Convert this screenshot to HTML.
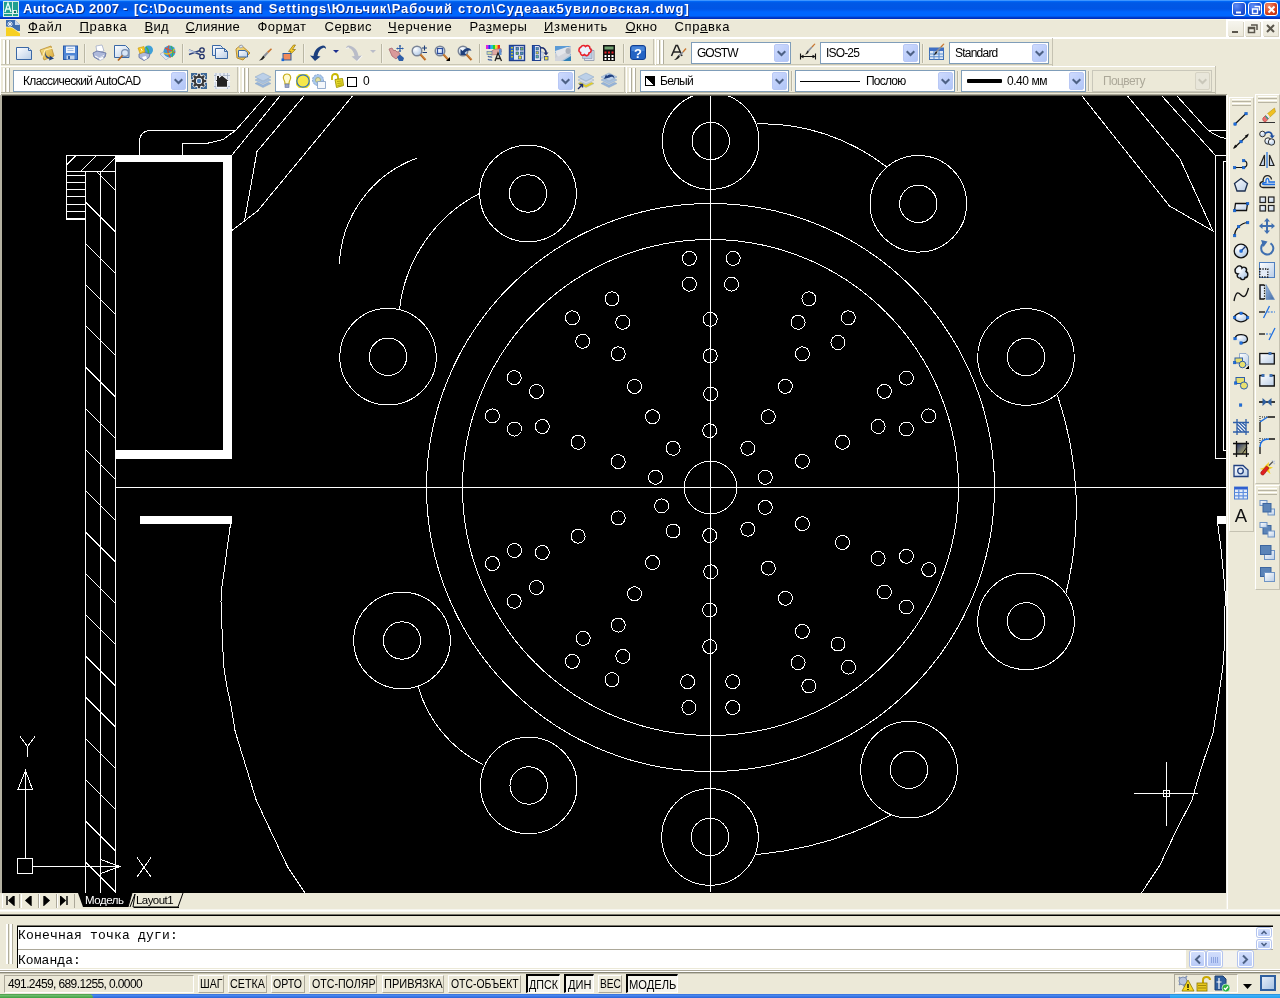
<!DOCTYPE html><html><head><meta charset="utf-8"><title>AutoCAD 2007</title><style>
*,*:before,*:after{margin:0;padding:0;box-sizing:border-box}
html,body{width:1280px;height:998px;overflow:hidden;background:#ece9d8;font-family:"Liberation Sans",sans-serif;font-size:11px;color:#000}
.a{position:absolute}
#title{left:0;top:0;width:1280px;height:19px;background:linear-gradient(#3d95ff 0,#3d95ff 1px,#0066f5 1px,#0066f5 2px,#005fec 2px,#0058e6 3px,#0055e5 9px,#0060f8 11px,#0066ff 12px,#0066ff 16px,#0048d8 17px,#0030c0 18px,#0030c0 19px)}
#title .t{left:23px;top:1px;font-weight:bold;font-size:13.5px;color:#fff;white-space:nowrap;letter-spacing:.25px;text-shadow:1px 1px 0 #0a1f6b}
.cb{top:2px;width:14px;height:14px;border:1px solid #fff;border-radius:3px;background:radial-gradient(circle at 30% 25%,#5f8df5,#1f51d6 60%,#1741b8)}
.cb.x{background:radial-gradient(circle at 30% 25%,#f08a6c,#d8401c 60%,#b02c0c)}
#menu{left:0;top:19px;width:1280px;height:18px;background:#ece9d8}
#menu span{position:absolute;top:0px;font-size:13.3px;line-height:18px;white-space:nowrap;letter-spacing:.1px}
#menu u{text-decoration:underline;text-underline-offset:1px}
.wl{background:#fff}
.mb{top:21px;width:15px;height:15px;background:linear-gradient(#f6f5ee,#ebe8da);box-shadow:1px 1px 0 #d4d0c0}
.tb{background:#ece9d8}
.sep{width:2px;border-left:1px solid #bab7a4;border-right:1px solid #f3f1e6}
.grip{width:7px}
.grip:before,.grip:after{content:"";position:absolute;top:0;bottom:0;width:3px;border-left:2px solid #fff;border-right:1px solid #b0ad9c;background:#fff}
.grip:before{left:0}.grip:after{left:4px}
.hgrip{height:7px}
.hgrip:before,.hgrip:after{content:"";position:absolute;left:0;right:0;height:3px;border-top:1px solid #fff;border-bottom:1px solid #b8b4a2;background:#ece9d8}
.hgrip:before{top:0}.hgrip:after{top:4px}
.combo{background:#fff;border:1px solid #7f9db9;height:22px;font-size:11px;line-height:20px;white-space:nowrap;overflow:hidden}
.combo .dd{position:absolute;right:1px;top:1px;bottom:1px;width:15px;border-radius:2px;background:linear-gradient(135deg,#cddafd,#bccdfa 60%,#b0c6f6);border:1px solid #b9c8f5}
.combo .dd svg{position:absolute;left:2px;top:5px}
.combo.dis{background:#ece9d8;border-color:#c9c7ba;color:#aca899}
.combo.dis .dd{background:#e8e6da;border-color:#d6d3c4}
.combo span{position:absolute;top:0}
#root{position:absolute;left:0;top:0;width:1280px;height:998px;will-change:transform;transform:translateZ(0)}
#draw{left:2px;top:96px;width:1224px;height:797px;background:#000;overflow:hidden}
.sb{top:975px;height:17px;font-size:11.5px;line-height:17px;text-align:center;border:1px solid;border-color:#fff #aca899 #aca899 #fff;white-space:nowrap;letter-spacing:.2px}
.sb.on{border-color:#000 #fff #fff #000;border-width:2px 1px 1px 2px;line-height:15px}
</style></head><body><div id="root">
<div id="title" class="a">
<svg class="a" style="left:3px;top:1px" width="16" height="16" viewBox="0 0 16 16"><rect width="16" height="16" fill="#1f9f8f"/><rect x=".5" y=".5" width="15" height="15" fill="none" stroke="#d8f0e8"/><path d="M2 11L5 2L8 11M3 8H7" stroke="#e8fff8" stroke-width="1.300" fill="none"/><path d="M9.500 1V15M1 12.500H15" stroke="#d8f0e8" stroke-width="1"/><rect x="10.500" y="9.500" width="3" height="3" fill="#0f6f5f" stroke="#fff" stroke-width=".8"/></svg>
<span class="a" style="left:23px;top:1px;font:700 13px/16px 'Liberation Sans',sans-serif;letter-spacing:0.605px;color:#fff;white-space:pre;text-shadow:1px 1px 0 #0a2a8a;">AutoCAD</span>
<span class="a" style="left:89px;top:1px;font:700 13px/16px 'Liberation Sans',sans-serif;letter-spacing:0.395px;color:#fff;white-space:pre;text-shadow:1px 1px 0 #0a2a8a;">2007</span>
<span class="a" style="left:123px;top:1px;font:700 13px/16px 'Liberation Sans',sans-serif;letter-spacing:1.656px;color:#fff;white-space:pre;text-shadow:1px 1px 0 #0a2a8a;">-</span>
<span class="a" style="left:134px;top:1px;font:700 13px/16px 'Liberation Sans',sans-serif;letter-spacing:0.542px;color:#fff;white-space:pre;text-shadow:1px 1px 0 #0a2a8a;">[C:\Documents</span>
<span class="a" style="left:238.8px;top:1px;font:700 13px/16px 'Liberation Sans',sans-serif;letter-spacing:0.125px;color:#fff;white-space:pre;text-shadow:1px 1px 0 #0a2a8a;">and</span>
<span class="a" style="left:268.8px;top:1px;font:700 13px/16px 'Liberation Sans',sans-serif;letter-spacing:0.885px;color:#fff;white-space:pre;text-shadow:1px 1px 0 #0a2a8a;">Settings\Юльчик\Рабочий</span>
<span class="a" style="left:458px;top:1px;font:700 13px/16px 'Liberation Sans',sans-serif;letter-spacing:1.061px;color:#fff;white-space:pre;text-shadow:1px 1px 0 #0a2a8a;">стол\Судеаак5увиловская.dwg]</span>
<div class="a cb" style="left:1232px"><svg class="a" style="left:0;top:0" width="13" height="13" viewBox="0 0 13 13"><path d="M3 9.500H8" stroke="#fff" stroke-width="2"/></svg></div>
<div class="a cb" style="left:1248px"><svg class="a" style="left:0;top:0" width="13" height="13" viewBox="0 0 13 13"><path d="M5.500 3.500H10.500V7.500M3.500 6H8.500V10.500H3.500Z" stroke="#fff" stroke-width="1.400" fill="none"/></svg></div>
<div class="a cb x" style="left:1264px"><svg class="a" style="left:0;top:0" width="13" height="13" viewBox="0 0 13 13"><path d="M3.500 3.500L9.500 9.500M9.500 3.500L3.500 9.500" stroke="#fff" stroke-width="2"/></svg></div>
</div>
<div id="menu" class="a"></div>
<svg class="a" style="left:5px;top:20px" width="16" height="16" viewBox="0 0 16 16"><path d="M1 0H10L15 5V11H1Z" fill="#3f6fb0"/><path d="M10 0V5H15Z" fill="#c9d8ec"/><path d="M5 1V7M2 4H8M3 2L7 6M7 2L3 6" stroke="#fff" stroke-width=".8"/><path d="M1 16V7L7 7.500L15 13V16Z" fill="#f7d020"/><path d="M1 7L7 7.500L15 13" stroke="#fff8c0" stroke-width=".8" fill="none"/></svg>
<span class="a" style="left:28px;top:18px;font:400 13px/18px 'Liberation Sans',sans-serif;letter-spacing:0.633px;color:#000;white-space:pre;"><u>Ф</u>айл</span>
<span class="a" style="left:79.5px;top:18px;font:400 13px/18px 'Liberation Sans',sans-serif;letter-spacing:0.680px;color:#000;white-space:pre;"><u>П</u>равка</span>
<span class="a" style="left:144.5px;top:18px;font:400 13px/18px 'Liberation Sans',sans-serif;letter-spacing:0.323px;color:#000;white-space:pre;"><u>В</u>ид</span>
<span class="a" style="left:185.5px;top:18px;font:400 13px/18px 'Liberation Sans',sans-serif;letter-spacing:0.221px;color:#000;white-space:pre;"><u>С</u>лияние</span>
<span class="a" style="left:257.5px;top:18px;font:400 13px/18px 'Liberation Sans',sans-serif;letter-spacing:0.469px;color:#000;white-space:pre;">Фор<u>м</u>ат</span>
<span class="a" style="left:324.5px;top:18px;font:400 13px/18px 'Liberation Sans',sans-serif;letter-spacing:0.495px;color:#000;white-space:pre;">Се<u>р</u>вис</span>
<span class="a" style="left:388px;top:18px;font:400 13px/18px 'Liberation Sans',sans-serif;letter-spacing:0.748px;color:#000;white-space:pre;"><u>Ч</u>ерчение</span>
<span class="a" style="left:469.5px;top:18px;font:400 13px/18px 'Liberation Sans',sans-serif;letter-spacing:0.567px;color:#000;white-space:pre;">Ра<u>з</u>меры</span>
<span class="a" style="left:544px;top:18px;font:400 13px/18px 'Liberation Sans',sans-serif;letter-spacing:0.670px;color:#000;white-space:pre;"><u>И</u>зменить</span>
<span class="a" style="left:625.5px;top:18px;font:400 13px/18px 'Liberation Sans',sans-serif;letter-spacing:0.445px;color:#000;white-space:pre;"><u>О</u>кно</span>
<span class="a" style="left:674.5px;top:18px;font:400 13px/18px 'Liberation Sans',sans-serif;letter-spacing:0.643px;color:#000;white-space:pre;">Спр<u>а</u>вка</span>
<div class="a wl" style="left:1226px;top:19px;width:54px;height:19px"></div>
<div class="a" style="left:0;top:19px;width:1226px;height:1px;background:#f7f2dc"></div>
<div class="a wl" style="left:0;top:37px;width:1280px;height:2px"></div>
<div class="a mb" style="left:1228px"><svg class="a" style="left:0;top:0" width="15" height="15" viewBox="0 0 15 15"><path d="M4 11H10" stroke="#5a564c" stroke-width="2"/></svg></div>
<div class="a mb" style="left:1245px"><svg class="a" style="left:0;top:0" width="15" height="15" viewBox="0 0 15 15"><path d="M6 4H12V9M3.500 6.500H9.500V11.500H3.500ZM3.500 7.500H9.500" stroke="#5a564c" stroke-width="1.500" fill="none"/></svg></div>
<div class="a mb" style="left:1263px"><svg class="a" style="left:0;top:0" width="15" height="15" viewBox="0 0 15 15"><path d="M4 4L11 11M11 4L4 11" stroke="#5a564c" stroke-width="2"/></svg></div>
<svg width="0" height="0" class="a"><defs>
<linearGradient id="pg" x1="0" y1="0" x2="1" y2="1"><stop offset="0" stop-color="#fff"/><stop offset="1" stop-color="#b9cde6"/></linearGradient>
<linearGradient id="bl" x1="0" y1="0" x2="1" y2="1"><stop offset="0" stop-color="#9db9de"/><stop offset="1" stop-color="#3f6aa5"/></linearGradient>
<linearGradient id="yl" x1="0" y1="0" x2="1" y2="1"><stop offset="0" stop-color="#f7e28a"/><stop offset="1" stop-color="#d9a93a"/></linearGradient>
<radialGradient id="gl" cx=".35" cy=".3" r=".8"><stop offset="0" stop-color="#fff"/><stop offset="1" stop-color="#a9c4e4"/></radialGradient>
<linearGradient id="dk" x1="0" y1="0" x2="1" y2="1"><stop offset="0" stop-color="#7f9fcb"/><stop offset="1" stop-color="#44679b"/></linearGradient>
</defs></svg>
<div class="a" style="left:0;top:64px;width:1053px;height:1px;background:#c9c6b4"></div>
<div class="a" style="left:0;top:66px;width:1216px;height:1px;background:#fff"></div>
<div class="a" style="left:0;top:92px;width:1216px;height:1px;background:#b8b5a3"></div>
<div class="a" style="left:0;top:94px;width:1227px;height:2px;background:linear-gradient(#c9c6b5,#8a8878 45%,#2a2926)"></div>
<div class="a" style="left:0;top:38px;width:1px;height:58px;background:#fff"></div>
<div class="a" style="left:653px;top:39px;width:1px;height:26px;background:#c5c2b2"></div><div class="a" style="left:655px;top:39px;width:1px;height:26px;background:#fff"></div>
<div class="a" style="left:1052px;top:38px;width:1px;height:28px;background:#c5c2b2"></div>
<div class="a" style="left:237px;top:67px;width:1px;height:26px;background:#c5c2b2"></div><div class="a" style="left:239px;top:67px;width:1px;height:26px;background:#fff"></div>
<div class="a" style="left:624px;top:67px;width:1px;height:26px;background:#c5c2b2"></div><div class="a" style="left:626px;top:67px;width:1px;height:26px;background:#fff"></div>
<div class="a" style="left:1215px;top:66px;width:1px;height:28px;background:#c5c2b2"></div>
<div class="a grip" style="left:3px;top:40px;height:24px"></div>
<div class="a grip" style="left:657px;top:40px;height:24px"></div>
<div class="a grip" style="left:3px;top:68px;height:24px"></div>
<div class="a grip" style="left:242px;top:68px;height:24px"></div>
<div class="a grip" style="left:629px;top:68px;height:24px"></div>
<svg class="a" style="left:16px;top:44px;overflow:visible" width="16" height="16" viewBox="0 0 16 16"><path d="M.5 3.5H12.5L15.5 6.5V15.5H.5Z" fill="url(#pg)" stroke="#3a68a6"/><path d="M12.5 3.5V6.5H15.5" fill="#dfe9f5" stroke="#3a68a6"/></svg>
<svg class="a" style="left:39px;top:45px;overflow:visible" width="16" height="16" viewBox="0 0 16 16"><path d="M1 5L12 1L15 11L5 15Z" fill="url(#yl)" stroke="#b98d32" stroke-width=".8"/><path d="M3 13L6 5L14 3" fill="none" stroke="#fff3c4"/><path d="M7 6C6 10 8 12 11 12.5L10.5 10.5L15 13.5L10 15.5L10.5 13.8C7 13.5 5 10.5 7 6Z" fill="#1d3f7a"/></svg>
<svg class="a" style="left:63px;top:44px;overflow:visible" width="16" height="16" viewBox="0 0 16 16"><rect x=".500" y="2" width="14" height="13.500" fill="#4f86d6" stroke="#2a5aa8"/><rect x="3" y="2.500" width="9" height="6.500" fill="#eef3fb"/><path d="M4.500 4.500H10.500M4.500 6.500H10.500" stroke="#8fb0dc" stroke-width=".800"/><rect x="3.500" y="11.500" width="8" height="4" fill="#c5d5ea"/><rect x="5" y="12" width="2" height="3" fill="#2f5fa8"/></svg>
<svg class="a" style="left:92px;top:45px;overflow:visible" width="16" height="16" viewBox="0 0 16 16"><path d="M4 1L10 0L12 6L5 8Z" fill="#fff" stroke="#98a4c4" stroke-width=".7"/><path d="M1 8L5 6L14 8L13 12L7 15L2 12Z" fill="#aeb9da" stroke="#5b6b9e" stroke-width=".8"/><path d="M3 11L7 13L12 10.5" stroke="#fff" fill="none"/><path d="M6 13L11 11.5L12 13.5L8 15.5Z" fill="#fff" stroke="#98a4c4" stroke-width=".5"/></svg>
<svg class="a" style="left:114px;top:44px;overflow:visible" width="16" height="16" viewBox="0 0 16 16"><path d="M.5 1.5H11.5L15 5V13.5H.5Z" fill="url(#pg)" stroke="#3a68a6"/><circle cx="11" cy="9" r="3.400" fill="#dbe8f6" fill-opacity=".850" stroke="#7a8fb0" stroke-width="1.200"/><path d="M8.500 11.500L4 16.500" stroke="#b5651d" stroke-width="1.800"/></svg>
<svg class="a" style="left:137px;top:45px;overflow:visible" width="16" height="16" viewBox="0 0 16 16"><circle cx="11.5" cy="5" r="4.5" fill="#3fa0d8"/><path d="M9 2C11 4 12 7 11 9.5" stroke="#3fb34f" stroke-width="1.5" fill="none"/><path d="M2 9L6 7L13 9L12 12.5L7 15.5L2 12.5Z" fill="#aeb9da" stroke="#5b6b9e" stroke-width=".8"/><path d="M5 12L9 11L10 13.5L7 15Z" fill="#fff"/><path d="M1 3L7 1.5L8 7L3 8.5Z" fill="#f2c722" stroke="#c9960c" stroke-width=".6"/><path d="M4 3.5L5 5.5L4 6.5" stroke="#fff" fill="none"/></svg>
<svg class="a" style="left:160px;top:45px;overflow:visible" width="16" height="16" viewBox="0 0 16 16"><path d="M0 9L5 6L12 10L6 15Z" fill="#dfe6f2" stroke="#9aa7c0" stroke-width=".6"/><circle cx="9.5" cy="6.5" r="6" fill="#3b9ad6"/><path d="M5 3C8 5 13 5 15 8M9 .5C7 4 8 9 10.5 12.5" stroke="#e05030" stroke-width="1.2" fill="none"/><path d="M4 8C7 10 12 9 14.5 4" stroke="#f0c020" stroke-width="1.3" fill="none"/><path d="M11 1C13 4 13 9 12 12" stroke="#3fb34f" stroke-width="1.2" fill="none"/></svg>
<svg class="a" style="left:189px;top:45px;overflow:visible" width="16" height="16" viewBox="0 0 16 16"><path d="M0 5L11 9.5M0 9.5L11 5.5" stroke="#31467f" stroke-width="1.4"/><path d="M0 4.5L9 8L0 7Z" fill="#c9d4ea"/><circle cx="13" cy="5" r="2.2" fill="none" stroke="#1f2f68" stroke-width="1.3"/><circle cx="13" cy="11.5" r="2.2" fill="none" stroke="#1f2f68" stroke-width="1.3"/></svg>
<svg class="a" style="left:212px;top:44px;overflow:visible" width="16" height="16" viewBox="0 0 16 16"><path d="M.5 1.5H8.5L10.5 3.5V11.5H.5Z" fill="url(#pg)" stroke="#3a68a6"/><path d="M3.5 4.5H12.5L15.5 7.5V14.5H3.5Z" fill="url(#pg)" stroke="#3a68a6"/><path d="M12.5 4.5V7.5H15.5" fill="none" stroke="#3a68a6"/></svg>
<svg class="a" style="left:235px;top:45px;overflow:visible" width="16" height="16" viewBox="0 0 16 16"><path d="M1 4L6 0L15 8L8 15L2 13Z" fill="url(#yl)" stroke="#b98d32"/><path d="M4 1L7 0L8 2L5 3Z" fill="#dfe6f2" stroke="#7f8fb0" stroke-width=".6"/><path d="M3.5 5.5H10L12.5 7.5V12H3.5Z" fill="url(#pg)" stroke="#3a68a6"/></svg>
<svg class="a" style="left:258px;top:45px;overflow:visible" width="16" height="16" viewBox="0 0 16 16"><path d="M1 15.5C3.5 15.5 5.5 14.5 7 12L5.3 10.5C4 12 3.5 14 1 15.5Z" fill="#222"/><path d="M5.3 10.5L7 12L10.5 8L9 6.7Z" fill="#8a8f99"/><path d="M9 6.700L10.500 8L14 4.200L13 3.200Z" fill="#c8742e"/></svg>
<svg class="a" style="left:281px;top:45px;overflow:visible" width="16" height="16" viewBox="0 0 16 16"><path d="M12.5 0L7.5 6.5H10L7 11.5L14.5 4.5H11.5L14.500 0Z" fill="#f7cf2a" stroke="#8f6d0f" stroke-width=".700"/><rect x="2" y="8.500" width="8" height="6.500" fill="#f08a5a" stroke="#2f5f9f"/><rect x=".500" y="13.500" width="2.600" height="2.600" fill="#1565d8"/></svg>
<svg class="a" style="left:310px;top:45px;overflow:visible" width="16" height="16" viewBox="0 0 16 16"><path d="M5 16L0 10.5L3.5 11C4 6 8 1 13 .5C15 .5 16 2 16 4C15 3 14 2.5 13 3C10 4 8 7 7.5 11L10.5 11.5Z" fill="#1c3f7e"/></svg>
<svg class="a" style="left:346px;top:45px;overflow:visible" width="16" height="16" viewBox="0 0 16 16"><path d="M11.500 16.500L16.500 11L15.500 10.500L10.500 16Z" fill="#fff"/><path d="M11 16L16 10.500L12.500 11C12 6 8 1 3 .500C1 .500 0 2 0 4C1 3 2 2.500 3 3C6 4 8 7 8.500 11L5.500 11.500Z" fill="#b9bcc8"/><path d="M0 4C.5 3 2 2.500 3 3" stroke="#fff" stroke-width=".8" fill="none"/></svg>
<svg class="a" style="left:388px;top:45px;overflow:visible" width="16" height="16" viewBox="0 0 16 16"><path d="M1 4L4 3L6 6L7 5L9 7L10.500 6.500L12 10L8 14L4 11Z" fill="#d99a9a" stroke="#a05c66" stroke-width=".7"/><path d="M9 12L12 9.500L16 13L15 16H11Z" fill="#2f5fa8"/><path d="M12 0V7M8.500 3.500H15.500" stroke="#2f5fa8" stroke-width="1.1"/><path d="M12 0L13.300 1.500H10.700ZM12 7L13.300 5.500H10.700ZM8.500 3.500L10 2.200V4.800ZM15.500 3.500L14 2.200V4.800Z" fill="#2f5fa8"/></svg>
<svg class="a" style="left:411px;top:45px;overflow:visible" width="16" height="16" viewBox="0 0 16 16"><circle cx="6" cy="6" r="4.800" fill="url(#gl)" stroke="#7a8496" stroke-width="1.400"/><path d="M9.500 9.500L14.500 15" stroke="#b5651d" stroke-width="2"/><path d="M9.800 9.200L14.800 14.500" stroke="#e7a660" stroke-width=".7"/><path d="M11 3H16M13.500 .500V5.500M11.500 7.500H16" stroke="#1f3f7a" stroke-width="1.100"/></svg>
<svg class="a" style="left:434px;top:45px;overflow:visible" width="16" height="16" viewBox="0 0 16 16"><circle cx="6" cy="6" r="4.800" fill="url(#gl)" stroke="#7a8496" stroke-width="1.400"/><path d="M9.500 9.500L14.500 15" stroke="#b5651d" stroke-width="2"/><path d="M9.800 9.200L14.800 14.500" stroke="#e7a660" stroke-width=".7"/><rect x="3.500" y="3.500" width="5" height="5" fill="none" stroke="#2f4f9f" stroke-width="1.200"/><path d="M16 12V16H12Z" fill="#000"/></svg>
<svg class="a" style="left:457px;top:45px;overflow:visible" width="16" height="16" viewBox="0 0 16 16"><circle cx="6" cy="6" r="4.800" fill="url(#gl)" stroke="#7a8496" stroke-width="1.400"/><path d="M9.500 9.500L14.500 15" stroke="#b5651d" stroke-width="2"/><path d="M9.800 9.200L14.800 14.500" stroke="#e7a660" stroke-width=".7"/><path d="M3.5 4V10H9.5L7.6 8.1C9 6 11.5 4.8 14.5 5.8C13.5 2.5 9 1.5 5.6 6.1Z" fill="#1f3f7a"/></svg>
<svg class="a" style="left:486px;top:45px;overflow:visible" width="16" height="16" viewBox="0 0 16 16"><rect x="0" y="0" width="2.400" height="4" fill="#e01fe0"/><rect x="2.300" y="0" width="2.400" height="4" fill="#2a2af0"/><rect x="4.600" y="0" width="2.400" height="4" fill="#20c0e0"/><rect x="6.900" y="0" width="2.400" height="4" fill="#20d030"/><rect x="9.200" y="0" width="2.400" height="4" fill="#f0e020"/><rect x="11.500" y="0" width="2.500" height="4" fill="#f03020"/><path d="M3 8L8 4.500L15 3.500L15.500 7L11 9.500L5 10Z" fill="#e0a8a0" stroke="#9c6060" stroke-width=".6"/><rect x="1" y="6.500" width="5" height="3" fill="#cfd8a0" stroke="#5f7fb0" stroke-width=".7"/><path d="M2 11C3 13 5 11 6 12.500M2 14C3 16 5 14 6 15.500" stroke="#3f5f9f" fill="none" stroke-width="1.200"/><path d="M9 16L12 8L15.500 16M10 13.500H14.500" stroke="#222" fill="none" stroke-width="1.300"/><rect x="13" y="4" width="2.500" height="6" fill="#5f8fd0"/></svg>
<svg class="a" style="left:509px;top:45px;overflow:visible" width="16" height="16" viewBox="0 0 16 16"><rect x=".500" y=".500" width="15" height="15" fill="#dfe6f2" stroke="#1f3f8f" stroke-width="1.400"/><rect x="1" y="1" width="4" height="14" fill="#2d5fb5"/><path d="M3 2V14" stroke="#f0e020" stroke-width="1.500" stroke-dasharray="1.500 1.500"/><rect x="7" y="2.500" width="2.600" height="2.600" fill="#59a" stroke="#1f3f8f" stroke-width=".6"/><rect x="11.500" y="2.500" width="2.600" height="2.600" fill="#7b5" stroke="#1f3f8f" stroke-width=".6"/><rect x="7" y="7" width="2.600" height="2.600" fill="#7b5" stroke="#1f3f8f" stroke-width=".6"/><rect x="11.500" y="7" width="2.600" height="2.600" fill="#59a" stroke="#1f3f8f" stroke-width=".6"/><rect x="9.500" y="11" width="3" height="3" fill="#f0e020" stroke="#1f3f8f" stroke-width=".6"/></svg>
<svg class="a" style="left:532px;top:45px;overflow:visible" width="16" height="16" viewBox="0 0 16 16"><path d="M.500 .500H7L8.500 2V15.500H.500Z" fill="#e4eaf5" stroke="#1f3f8f" stroke-width="1.200"/><rect x="1" y="1" width="2" height="14" fill="#2d5fb5"/><rect x="4" y="2.500" width="2.500" height="2.500" fill="#59a" stroke="#1f3f8f" stroke-width=".5"/><rect x="4" y="6.500" width="2.500" height="2.500" fill="#cc4" stroke="#1f3f8f" stroke-width=".5"/><rect x="4" y="10.500" width="2.500" height="2.500" fill="#6b9" stroke="#1f3f8f" stroke-width=".5"/><path d="M8 3C12 2 14 5 14 8" stroke="#1f2f6f" stroke-width="1.600" fill="none"/><path d="M11.500 7.500H16.500L14 10.500Z" fill="#1f2f6f"/><rect x="12.500" y="11.500" width="3.500" height="3.500" fill="#f0e040" stroke="#1f3f8f" stroke-width=".7"/><rect x="9" y="7" width="2" height="6" fill="#e4eaf5" stroke="#7a8cb0" stroke-width=".5"/></svg>
<svg class="a" style="left:555px;top:45px;overflow:visible" width="16" height="16" viewBox="0 0 16 16"><rect x="0" y="1" width="16" height="15" fill="#5b9bd5"/><path d="M0 8L16 1V9L6 16H0Z" fill="#c9ced6"/><path d="M0 6L12 2C14 2 15 4 14 6L3 12Z" fill="#e4e6ea"/><ellipse cx="13" cy="6" rx="2.500" ry="3" fill="#aab0ba"/><path d="M0 13L10 8L16 10V16H0Z" fill="#d5d8de" fill-opacity=".7"/><path d="M8 16L16 11V16Z" fill="#2f7fb5"/></svg>
<svg class="a" style="left:578px;top:45px;overflow:visible" width="16" height="16" viewBox="0 0 16 16"><path d="M6.500 5.500H16V15.500H6.500Z" fill="#dfe4ee" stroke="#8a94ac" stroke-width=".800"/><path d="M4.500 4H14V13.500H4.500Z" fill="#b9cde6" stroke="#8a94ac" stroke-width=".600"/><path d="M3 2C4 0 6.500 0 7.500 1.500C9 0 12 .500 12 3.500C14 4.500 13.500 7.500 11 8C11 10.500 8 11.500 6.500 9.500C4.500 11 2 10 2.500 7.500C.500 7 0 3.500 3 2Z" fill="#eaf1fb" stroke="#e8202a" stroke-width="1.600"/></svg>
<svg class="a" style="left:603px;top:45px;overflow:visible" width="16" height="16" viewBox="0 0 16 16"><rect x="0" y="0" width="12" height="16" fill="#111"/><rect x="1.500" y="1.500" width="9" height="3" fill="#6f9f6f"/><g fill="#e8202a"><rect x="1.500" y="6.500" width="2" height="2"/><rect x="5" y="6.500" width="2" height="2"/><rect x="8.500" y="6.500" width="2" height="2"/></g><g fill="#fff"><rect x="1.500" y="10" width="2" height="2"/><rect x="5" y="10" width="2" height="2"/><rect x="8.500" y="10" width="2" height="2"/><rect x="1.500" y="13" width="2" height="2"/><rect x="5" y="13" width="2" height="2"/><rect x="8.500" y="13" width="2" height="2"/></g></svg>
<svg class="a" style="left:630px;top:45px;overflow:visible" width="16" height="16" viewBox="0 0 16 16"><rect x=".500" y=".500" width="15" height="14" rx="2.500" fill="#2464c4" stroke="#123f8f"/><path d="M1.500 3C1.500 2 2 1.500 3 1.500H13C14 1.500 14.500 2 14.500 3V6H1.500Z" fill="#5a93e0" fill-opacity=".7"/><text x="8" y="12.500" font-family="Liberation Sans,sans-serif" font-weight="bold" font-size="13" fill="#fff" text-anchor="middle">?</text></svg>
<div class="a sep" style="left:84px;top:44px;height:19px"></div>
<div class="a sep" style="left:182px;top:44px;height:19px"></div>
<div class="a sep" style="left:303px;top:44px;height:19px"></div>
<div class="a sep" style="left:381px;top:44px;height:19px"></div>
<div class="a sep" style="left:479px;top:44px;height:19px"></div>
<div class="a sep" style="left:623px;top:44px;height:19px"></div>
<svg class="a" style="left:333px;top:50px;overflow:visible" width="6" height="3" viewBox="0 0 6 3"><path d="M0 0H6L3 3Z" fill="#1c2f8e"/></svg>
<svg class="a" style="left:370px;top:50px;overflow:visible" width="6" height="3" viewBox="0 0 6 3"><path d="M0 0H6L3 3Z" fill="#b9bcc8"/></svg>
<svg class="a" style="left:671px;top:44px;overflow:visible" width="16" height="16" viewBox="0 0 16 16"><path d="M.5 12L5 1.5H6.5L11 12M2.5 8H9" stroke="#222" stroke-width="1.500" fill="none"/><path d="M3 16C6 16 7.500 14.500 9 12.500L7.500 11C6 12.500 5.500 14.500 3 16Z" fill="#222"/><path d="M7.500 11L9 12.500L12.500 8.500L11.500 7.500Z" fill="#8a8f99"/><path d="M11.500 7.500L12.500 8.500L15.500 5L14.500 4Z" fill="#c8742e"/></svg>
<div class="a combo" style="left:691px;top:42px;width:100px;height:22px"><span class="a" style="left:5px;top:0px;font:400 12px/20px 'Liberation Sans',sans-serif;letter-spacing:-0.966px;color:#000;white-space:pre;">GOSTW</span><div class="dd"><svg width="9" height="7" viewBox="0 0 9 7"><path d="M.7 1.200L4.500 5L8.300 1.200" fill="none" stroke="#4d6185" stroke-width="2"/></svg></div></div>
<svg class="a" style="left:800px;top:44px;overflow:visible" width="16" height="16" viewBox="0 0 16 16"><path d="M0 12.500H16M.500 9.500V15.500M15.500 9.500V15.500" stroke="#111" stroke-width="1.100"/><path d="M0 12.500L3.500 10.800V14.200ZM16 12.500L12.500 10.800V14.200Z" fill="#111"/><path d="M4.500 10.500C7 10.500 8 9.500 9 7.500L7.500 6.500C6.500 8 6.500 9.500 4.500 10.500Z" fill="#222"/><path d="M7.500 6.500L9 7.500L12.500 3.500L11.500 2.500Z" fill="#8a8f99"/><path d="M11.500 2.500L12.500 3.500L15.500 0L14.500 -.5Z" fill="#c8742e"/></svg>
<div class="a combo" style="left:820px;top:42px;width:100px;height:22px"><span class="a" style="left:5px;top:0px;font:400 12px/20px 'Liberation Sans',sans-serif;letter-spacing:-0.836px;color:#000;white-space:pre;">ISO-25</span><div class="dd"><svg width="9" height="7" viewBox="0 0 9 7"><path d="M.7 1.200L4.500 5L8.300 1.200" fill="none" stroke="#4d6185" stroke-width="2"/></svg></div></div>
<div class="a sep" style="left:922px;top:44px;height:19px"></div>
<svg class="a" style="left:929px;top:44px;overflow:visible" width="16" height="16" viewBox="0 0 16 16"><rect x=".500" y="4" width="14" height="11.500" fill="#dfe8f5" stroke="#3f6fb5"/><rect x=".500" y="4" width="14" height="3" fill="#3f6fc5"/><path d="M.500 10H14.500M.500 12.800H14.500M5 7V15.500M10 7V15.500" stroke="#5f8fd0" stroke-width="1.100"/><path d="M4 11C6.500 11 7.500 10 8.500 8L7 7C6 8.500 6 10 4 11Z" fill="#222"/><path d="M7 7L8.500 8L12.500 3.500L11.500 2.500Z" fill="#8a8f99"/><path d="M11.500 2.500L12.500 3.500L15.500 0L14.500 -.5Z" fill="#c8742e"/></svg>
<div class="a combo" style="left:949px;top:42px;width:100px;height:22px"><span class="a" style="left:5px;top:0px;font:400 12px/20px 'Liberation Sans',sans-serif;letter-spacing:-0.775px;color:#000;white-space:pre;">Standard</span><div class="dd"><svg width="9" height="7" viewBox="0 0 9 7"><path d="M.7 1.200L4.500 5L8.300 1.200" fill="none" stroke="#4d6185" stroke-width="2"/></svg></div></div>
<div class="a combo" style="left:13px;top:70px;width:175px;height:22px"><span class="a" style="left:9px;top:0px;font:400 12px/20px 'Liberation Sans',sans-serif;letter-spacing:-0.641px;color:#000;white-space:pre;">Классический AutoCAD</span><div class="dd"><svg width="9" height="7" viewBox="0 0 9 7"><path d="M.7 1.200L4.500 5L8.300 1.200" fill="none" stroke="#4d6185" stroke-width="2"/></svg></div></div>
<svg class="a" style="left:191px;top:73px;overflow:visible" width="16" height="16" viewBox="0 0 16 16"><rect width="16" height="16" fill="#3d6896"/><g transform="translate(8 8)"><g fill="#fff"><rect x="-1.900" y="-7.800" width="3.800" height="3.500" transform="rotate(0)"/><rect x="-1.900" y="-7.800" width="3.800" height="3.500" transform="rotate(45)"/><rect x="-1.900" y="-7.800" width="3.800" height="3.500" transform="rotate(90)"/><rect x="-1.900" y="-7.800" width="3.800" height="3.500" transform="rotate(135)"/><rect x="-1.900" y="-7.800" width="3.800" height="3.500" transform="rotate(180)"/><rect x="-1.900" y="-7.800" width="3.800" height="3.500" transform="rotate(225)"/><rect x="-1.900" y="-7.800" width="3.800" height="3.500" transform="rotate(270)"/><rect x="-1.900" y="-7.800" width="3.800" height="3.500" transform="rotate(315)"/></g><circle r="4.600" fill="none" stroke="#fff" stroke-width="3.600"/><g fill="#3a3a3a"><rect x="-1.200" y="-7.200" width="2.400" height="3" transform="rotate(0)"/><rect x="-1.200" y="-7.200" width="2.400" height="3" transform="rotate(45)"/><rect x="-1.200" y="-7.200" width="2.400" height="3" transform="rotate(90)"/><rect x="-1.200" y="-7.200" width="2.400" height="3" transform="rotate(135)"/><rect x="-1.200" y="-7.200" width="2.400" height="3" transform="rotate(180)"/><rect x="-1.200" y="-7.200" width="2.400" height="3" transform="rotate(225)"/><rect x="-1.200" y="-7.200" width="2.400" height="3" transform="rotate(270)"/><rect x="-1.200" y="-7.200" width="2.400" height="3" transform="rotate(315)"/></g><circle r="4.200" fill="none" stroke="#3a3a3a" stroke-width="2.400"/><circle r="3" fill="#fff"/><circle r="2.200" fill="#4f7fb5"/></g></svg>
<svg class="a" style="left:214px;top:73px;overflow:visible" width="16" height="16" viewBox="0 0 16 16"><rect width="16" height="16" fill="#e6ebf2"/><path d="M0 2.500H16M0 13.500H16M2 0V16M6 0V3M10 0V3M13.500 0V16" stroke="#9aa8bc" stroke-width=".700"/><path d="M1.500 8L8 2.800L14.600 8H13V13.700H3V8ZM3 3H5V6L3 7.500Z" fill="#222" stroke="#fff" stroke-width="1.400" paint-order="stroke"/></svg>
<svg class="a" style="left:255px;top:73px;overflow:visible" width="16" height="16" viewBox="0 0 16 16"><path d="M8 0L16 4L8 8L0 4Z" fill="#bcd0e8" stroke="#7f9cc4" stroke-width=".5"/><path d="M0 7L8 11L16 7L13.500 5.800L8 8.500L2.500 5.800Z" fill="#a9c2e0" stroke="#7f9cc4" stroke-width=".4"/><path d="M0 10.500L8 14.500L16 10.500L13.500 9.300L8 12L2.500 9.300Z" fill="#96b4d8" stroke="#7f9cc4" stroke-width=".4"/></svg>
<div class="a combo" style="left:275px;top:70px;width:300px;height:22px"><svg class="a" style="left:6px;top:3px;overflow:visible" width="10" height="14" viewBox="0 0 10 14"><path d="M5 0C1.500 0 .500 3.500 2 6C3 7.500 3 8.500 3 10H7C7 8.500 7 7.500 8 6C9.500 3.500 8.500 0 5 0Z" fill="#fffbd0" stroke="#c9b020" stroke-width="1.200"/><rect x="3" y="10" width="4" height="3.500" fill="#9aa4c4" stroke="#5f6f9f" stroke-width=".6"/></svg><svg class="a" style="left:20px;top:3px;overflow:visible" width="14" height="14" viewBox="0 0 14 14"><rect x="0" y="0" width="14" height="14" fill="#f5e220"/><path d="M0 0L3 0L0 3ZM14 0V3L11 0ZM0 14V11L3 14ZM14 14H11L14 11Z" fill="#fff"/><circle cx="7" cy="7" r="6.200" fill="#f7e84a" stroke="#2f6fc0" stroke-width="1.200"/></svg><svg class="a" style="left:36px;top:3px;overflow:visible" width="14" height="15" viewBox="0 0 14 15"><circle cx="6" cy="6" r="5.500" fill="#a9c8ec" stroke="#6f93c4" stroke-width=".8" stroke-dasharray="2 1"/><circle cx="6" cy="6" r="2.500" fill="#e8e2a0" stroke="#8f9f6f" stroke-width=".7"/><path d="M5.500 7.500H13.500V14.500H5.500Z" fill="#f4f7fb" stroke="#7f9cc4" stroke-width=".8"/></svg><svg class="a" style="left:54px;top:2px;overflow:visible" width="14" height="15" viewBox="0 0 14 15"><path d="M2 7V4C2 0 8 0 8 4V6" fill="none" stroke="#c9b800" stroke-width="1.800"/><path d="M5 6.500L12.500 5.500L13.500 12.500L6.500 14.500Z" fill="#e8dc30" stroke="#9f9400" stroke-width=".9"/><path d="M7 8.500L11.500 8M7.300 10.500L12 10M7.500 12.500L12.300 11.800" stroke="#9f9400" stroke-width=".7"/></svg><div class="a" style="left:71px;top:6px;width:10px;height:10px;border:1px solid #000;background:#fff"></div><span class="a" style="left:87px;top:0px;font:400 12px/20px 'Liberation Sans',sans-serif;letter-spacing:-0.688px;color:#000;white-space:pre;">0</span><div class="dd"><svg width="9" height="7" viewBox="0 0 9 7"><path d="M.7 1.200L4.500 5L8.300 1.200" fill="none" stroke="#4d6185" stroke-width="2"/></svg></div></div>
<svg class="a" style="left:578px;top:73px;overflow:visible" width="16" height="16" viewBox="0 0 16 16"><path d="M8 0L16 4L8 8L0 4Z" fill="#bcd0e8" stroke="#7f9cc4" stroke-width=".5"/><path d="M0 7L8 11L16 7L13.500 5.800L8 8.500L2.500 5.800Z" fill="#d8dde6" stroke="#7f9cc4" stroke-width=".4"/><path d="M0 10.500L8 14.500L16 10.500L13.500 9.300L8 12L2.500 9.300Z" fill="#e8d020" stroke="#7f9cc4" stroke-width=".4"/><path d="M0 16L4.500 11.500M1.500 11.500H4.500V14.500" stroke="#1f2f6f" stroke-width="1.400" fill="none"/></svg>
<svg class="a" style="left:601px;top:73px;overflow:visible" width="16" height="16" viewBox="0 0 16 16"><path d="M8 0L16 4L8 8L0 4Z" fill="#bcd0e8" stroke="#7f9cc4" stroke-width=".5"/><path d="M0 7L8 11L16 7L13.500 5.800L8 8.500L2.500 5.800Z" fill="#a9c2e0" stroke="#7f9cc4" stroke-width=".4"/><path d="M0 10.500L8 14.500L16 10.500L13.500 9.300L8 12L2.500 9.300Z" fill="#96b4d8" stroke="#7f9cc4" stroke-width=".4"/><path d="M3 6L8.500 4.500L7.500 6C9 3.500 11.500 3 13.500 5.500C13.500 2 9 0 6 3L5 1.500Z" fill="#1f3f7e"/></svg>
<div class="a combo" style="left:640px;top:70px;width:149px;height:22px"><div class="a" style="left:4px;top:5px;width:10px;height:10px;background:linear-gradient(to top right,#fff 49%,#000 50%);border:1px solid #000"></div><span class="a" style="left:19px;top:0px;font:400 12px/20px 'Liberation Sans',sans-serif;letter-spacing:-0.697px;color:#000;white-space:pre;">Белый</span><div class="dd"><svg width="9" height="7" viewBox="0 0 9 7"><path d="M.7 1.200L4.500 5L8.300 1.200" fill="none" stroke="#4d6185" stroke-width="2"/></svg></div></div>
<div class="a sep" style="left:791px;top:71px;height:20px"></div>
<div class="a combo" style="left:795px;top:70px;width:160px;height:22px"><div class="a" style="left:4px;top:10px;width:60px;height:1px;background:#000"></div><span class="a" style="left:70px;top:0px;font:400 12px/20px 'Liberation Sans',sans-serif;letter-spacing:-0.768px;color:#000;white-space:pre;">Послою</span><div class="dd"><svg width="9" height="7" viewBox="0 0 9 7"><path d="M.7 1.200L4.500 5L8.300 1.200" fill="none" stroke="#4d6185" stroke-width="2"/></svg></div></div>
<div class="a sep" style="left:957px;top:71px;height:20px"></div>
<div class="a combo" style="left:961px;top:70px;width:125px;height:22px"><div class="a" style="left:5px;top:8px;width:35px;height:4px;background:#000;border-radius:1px"></div><span class="a" style="left:45px;top:0px;font:400 12px/20px 'Liberation Sans',sans-serif;letter-spacing:-0.458px;color:#000;white-space:pre;">0.40 мм</span><div class="dd"><svg width="9" height="7" viewBox="0 0 9 7"><path d="M.7 1.200L4.500 5L8.300 1.200" fill="none" stroke="#4d6185" stroke-width="2"/></svg></div></div>
<div class="a sep" style="left:1088px;top:71px;height:20px"></div>
<div class="a combo dis" style="left:1092px;top:70px;width:120px;height:22px"><span class="a" style="left:10px;top:0px;font:400 12px/20px 'Liberation Sans',sans-serif;letter-spacing:-0.618px;color:#aca899;white-space:pre;">Поцвету</span><div class="dd"><svg width="9" height="7" viewBox="0 0 9 7"><path d="M.7 1.200L4.500 5L8.300 1.200" fill="none" stroke="#c9c7ba" stroke-width="2"/></svg></div></div>
<div id="draw" class="a"><svg class="a" style="left:-2px;top:-96px" width="1280" height="998" viewBox="0 0 1280 998"><g fill="none" stroke="#fff" stroke-width="1" shape-rendering="crispEdges">
<circle cx="710.5" cy="487.5" r="284"/><circle cx="710.5" cy="487.5" r="248"/><circle cx="710.5" cy="487.5" r="26.3"/>
<circle cx="710.7" cy="141" r="48.3"/><circle cx="710.7" cy="141" r="18.7"/>
<circle cx="528" cy="193.5" r="48.3"/><circle cx="528" cy="193.5" r="18.7"/>
<circle cx="918.3" cy="203.8" r="48.3"/><circle cx="918.3" cy="203.8" r="18.7"/>
<circle cx="388" cy="356.7" r="48.3"/><circle cx="388" cy="356.7" r="18.7"/>
<circle cx="1026" cy="357" r="48.3"/><circle cx="1026" cy="357" r="18.7"/>
<circle cx="402" cy="640.5" r="48.3"/><circle cx="402" cy="640.5" r="18.7"/>
<circle cx="1026" cy="621.3" r="48.3"/><circle cx="1026" cy="621.3" r="18.7"/>
<circle cx="528.7" cy="785.5" r="48.3"/><circle cx="528.7" cy="785.5" r="18.7"/>
<circle cx="909" cy="769.7" r="48.3"/><circle cx="909" cy="769.7" r="18.7"/>
<circle cx="710" cy="837" r="48.3"/><circle cx="710" cy="837" r="18.7"/>
<circle cx="689.4" cy="258.4" r="7"/>
<circle cx="733.2" cy="258.4" r="7"/>
<circle cx="689.4" cy="284.2" r="7"/>
<circle cx="731.5" cy="284.2" r="7"/>
<circle cx="710.2" cy="319.3" r="7"/>
<circle cx="710.2" cy="355.8" r="7"/>
<circle cx="710.7" cy="393.9" r="7"/>
<circle cx="709.7" cy="430.7" r="7"/>
<circle cx="808.9" cy="298.8" r="7"/>
<circle cx="798.1" cy="322.3" r="7"/>
<circle cx="848.3" cy="317.8" r="7"/>
<circle cx="838" cy="342.5" r="7"/>
<circle cx="802.4" cy="353.8" r="7"/>
<circle cx="785.4" cy="386.4" r="7"/>
<circle cx="768.3" cy="416.7" r="7"/>
<circle cx="747.8" cy="448.3" r="7"/>
<circle cx="906.4" cy="378.1" r="7"/>
<circle cx="884.4" cy="391.4" r="7"/>
<circle cx="928.7" cy="415.9" r="7"/>
<circle cx="878.1" cy="426.5" r="7"/>
<circle cx="906.4" cy="429" r="7"/>
<circle cx="842.5" cy="442.3" r="7"/>
<circle cx="802.4" cy="461.3" r="7"/>
<circle cx="765.3" cy="477.3" r="7"/>
<circle cx="765.3" cy="507.4" r="7"/>
<circle cx="802.4" cy="523.7" r="7"/>
<circle cx="842.5" cy="542.5" r="7"/>
<circle cx="878.1" cy="558.5" r="7"/>
<circle cx="906.4" cy="556.3" r="7"/>
<circle cx="928.7" cy="569.6" r="7"/>
<circle cx="884.4" cy="592" r="7"/>
<circle cx="906.4" cy="607" r="7"/>
<circle cx="747.8" cy="529.2" r="7"/>
<circle cx="768.3" cy="568.1" r="7"/>
<circle cx="785.4" cy="598.3" r="7"/>
<circle cx="802.4" cy="631.4" r="7"/>
<circle cx="838" cy="644.1" r="7"/>
<circle cx="798.1" cy="662.7" r="7"/>
<circle cx="848.5" cy="667.2" r="7"/>
<circle cx="808.9" cy="686" r="7"/>
<circle cx="709.7" cy="535.5" r="7"/>
<circle cx="710.7" cy="571.8" r="7"/>
<circle cx="709.7" cy="610" r="7"/>
<circle cx="709.7" cy="646.6" r="7"/>
<circle cx="687.6" cy="681.7" r="7"/>
<circle cx="732.7" cy="681.7" r="7"/>
<circle cx="688.9" cy="707.5" r="7"/>
<circle cx="732.7" cy="707.5" r="7"/>
<circle cx="673.1" cy="531" r="7"/>
<circle cx="652.5" cy="562.6" r="7"/>
<circle cx="634.5" cy="593.8" r="7"/>
<circle cx="618.2" cy="625.1" r="7"/>
<circle cx="583.2" cy="638.4" r="7"/>
<circle cx="572.4" cy="661.4" r="7"/>
<circle cx="622.8" cy="656.4" r="7"/>
<circle cx="612" cy="679.7" r="7"/>
<circle cx="661.6" cy="505.9" r="7"/>
<circle cx="618.2" cy="517.9" r="7"/>
<circle cx="578.1" cy="536.2" r="7"/>
<circle cx="542.3" cy="552.5" r="7"/>
<circle cx="514.5" cy="550.5" r="7"/>
<circle cx="492.4" cy="563.6" r="7"/>
<circle cx="536.5" cy="587.5" r="7"/>
<circle cx="514.2" cy="601.3" r="7"/>
<circle cx="655.5" cy="477.3" r="7"/>
<circle cx="618.2" cy="461.6" r="7"/>
<circle cx="578.1" cy="442.3" r="7"/>
<circle cx="542.3" cy="426.5" r="7"/>
<circle cx="514.5" cy="429" r="7"/>
<circle cx="492.4" cy="415.9" r="7"/>
<circle cx="536.5" cy="391.4" r="7"/>
<circle cx="514.2" cy="377.6" r="7"/>
<circle cx="673.1" cy="448.3" r="7"/>
<circle cx="652.5" cy="416.7" r="7"/>
<circle cx="634.5" cy="386.4" r="7"/>
<circle cx="618.2" cy="353.8" r="7"/>
<circle cx="582.7" cy="341.3" r="7"/>
<circle cx="572.4" cy="317.8" r="7"/>
<circle cx="622.8" cy="322.3" r="7"/>
<circle cx="612" cy="298.8" r="7"/>
<path d="M710.5 96V892M115 487.5H1226"/>
<path d="M479.6 193.4A149.3 149.3 0 0 0 399.5 309.3M416.9 158.2A117.6 117.6 0 0 0 339.4 264.5M756.8 123.8A204.2 204.2 0 0 1 886.5 166.8M1057.3 394.9A349.7 349.7 0 0 1 1066 592.8M418.2 686.8A125.6 125.6 0 0 0 482.9 764.6M755.3 854.5A349.8 349.8 0 0 0 890.6 815.2"/>
<path d="M230.5 524L227.6 544.8L224.4 569.5L221.3 591.4L221 601.9L221.9 626.7L222.9 649.5L223.8 666.7L226.7 685.7L230.5 703L235.2 731.6L245.7 765.9L256.2 800.1L271.4 832.5L287.6 866.8L305 893"/>
<path d="M1217.7 524L1221 548.6L1224.4 582.9L1225.4 596.2L1224.8 611.4L1224.4 645.7L1222.9 666.7L1219.4 691.4L1217.7 703L1213 733.5L1203.8 760.1L1196.2 784.9L1192 800.1L1177.1 828.7L1160 864.9L1141.5 893"/>
<path d="M66.5 155.5H115.5V171.5H66.5ZM66.5 171.5V219H85.5M85.5 171.5V893M100.5 171.5V893M115.5 155V893"/>
<path d="M66.5 175.5H85.5M66.5 182.5H85.5M66.5 189.5H85.5M66.5 196.5H85.5M66.5 204.5H85.5M66.5 211.5H85.5M66.5 218.5H85.5"/>
<path d="M66.5 165L76 155.5M80.5 171.5L96.5 155.5M101.5 171.5L115.5 157.5"/>
<path d="M96.3 171.5L115.5 190.7M85.5 202.0L115.5 232.0M85.5 243.3L115.5 273.3M85.5 284.5L115.5 314.5M85.5 325.8L115.5 355.8M85.5 367.0L115.5 397.0M85.5 408.3L115.5 438.3M85.5 449.6L115.5 479.6M85.5 490.8L115.5 520.8M85.5 532.1L115.5 562.1M85.5 573.3L115.5 603.3M85.5 614.6L115.5 644.6M85.5 655.9L115.5 685.9M85.5 697.1L115.5 727.1M85.5 738.4L115.5 768.4M85.5 779.6L115.5 809.6M85.5 820.9L115.5 850.9M85.5 862.2L115.5 892.2"/>
<path d="M139.5 155V141Q140 130.5 151 130.5H235.5L266 96"/>
<path d="M182.5 155V143.5H206.5L223 139.5L235.5 130.5"/>
<path d="M232 155L280 96M244.5 221L257 151.5L304 96M232 230.5L257.5 211L352.5 96"/>
<path d="M1082 96L1169.5 206L1213 231L1180 159L1127.5 96M1162 96L1215.5 155.5M1177 96L1205 127Q1214 136.5 1226 138.5M1209.5 130.5H1226"/>
<path d="M1226 155.5H1215.5V458.5H1226M1226 161.5H1223.5V450.5H1226"/>
</g>
<g fill="#fff" shape-rendering="crispEdges">
<path d="M115 155H232V459H115V450H223V162H115Z"/>
<rect x="140" y="516" width="92" height="8"/>
<rect x="1217" y="516" width="9" height="8"/>
</g>
<g fill="none" stroke="#fff" stroke-width="1" shape-rendering="crispEdges">
<path d="M17.5 858.5H32.5V873.5H17.5ZM25.5 858V789M18 789.5H32.5L25.5 770.5ZM25.5 771V789M32.5 866.5H100M100.5 859.5V873.5L120 866.5ZM100 866.5H119"/>
<path d="M20 736.5L27.5 746.5L35 736.5M27.5 746.5V756.5M137 857.5L151 877M151 857.5L137 877"/>
<path d="M1134 793.5H1198M1166.5 762V826M1163.5 790.5H1169.5V796.5H1163.5Z"/>
</g></svg></div>
<div class="a" style="left:1226px;top:95px;width:2px;height:814px;background:linear-gradient(90deg,#f3f1e6 50%,#fff 50%)"></div>
<div class="a" style="left:1228px;top:95px;width:52px;height:814px;background:#ece9d8"></div>
<div class="a" style="left:1229px;top:97px;width:25px;height:435px;border:1px solid;border-color:#fff #c5c2b2 #c5c2b2 #fff"></div>
<div class="a hgrip" style="left:1232px;top:99px;width:19px"></div>
<div class="a" style="left:1255px;top:94px;width:25px;height:390px;border:1px solid;border-color:#fff #c5c2b2 #c5c2b2 #fff"></div>
<div class="a hgrip" style="left:1258px;top:96px;width:19px"></div>
<div class="a" style="left:1255px;top:485px;width:25px;height:105px;border:1px solid;border-color:#fff #c5c2b2 #c5c2b2 #fff"></div>
<div class="a hgrip" style="left:1258px;top:488px;width:19px"></div>
<svg class="a" style="left:1233px;top:111px;overflow:visible" width="16" height="16" viewBox="0 0 16 16"><path d="M2 13L13 2.500" stroke="#111" stroke-width="1.200"/><rect x="0.8" y="11.8" width="2.600" height="2.600" fill="#1c6ee0" stroke="#0a4fb0" stroke-width=".4"/><rect x="11.8" y="1.3" width="2.600" height="2.600" fill="#1c6ee0" stroke="#0a4fb0" stroke-width=".4"/></svg>
<svg class="a" style="left:1233px;top:133px;overflow:visible" width="16" height="16" viewBox="0 0 16 16"><path d="M1 15L15 2" stroke="#111" stroke-width="1.200"/><path d="M16 .500L11.800 2.800L13.800 5ZM0 16L4.200 13.800L2.200 11.600Z" fill="#111"/><rect x="6.8" y="7.3" width="2.600" height="2.600" fill="#1c6ee0" stroke="#0a4fb0" stroke-width=".4"/></svg>
<svg class="a" style="left:1233px;top:155px;overflow:visible" width="16" height="16" viewBox="0 0 16 16"><path d="M1.500 12.500H10.500C15 12 15 6 10.500 5.500" stroke="#111" stroke-width="1.200" fill="none"/><rect x="0.30000000000000004" y="11.3" width="2.600" height="2.600" fill="#1c6ee0" stroke="#0a4fb0" stroke-width=".4"/><rect x="9.3" y="11.3" width="2.600" height="2.600" fill="#1c6ee0" stroke="#0a4fb0" stroke-width=".4"/><rect x="9.3" y="4.3" width="2.600" height="2.600" fill="#1c6ee0" stroke="#0a4fb0" stroke-width=".4"/></svg>
<svg class="a" style="left:1233px;top:177px;overflow:visible" width="16" height="16" viewBox="0 0 16 16"><path d="M8 1.500L14.500 6.500L12 14H4L1.500 6.500Z" fill="url(#pg)" stroke="#1c2f4f" stroke-width="1.300"/></svg>
<svg class="a" style="left:1233px;top:199px;overflow:visible" width="16" height="16" viewBox="0 0 16 16"><path d="M1.500 11.500L2.500 4.500H14.500L13.500 11.500Z" fill="url(#pg)" stroke="#111" stroke-width="1.300"/><rect x="0.30000000000000004" y="10.3" width="2.600" height="2.600" fill="#1c6ee0" stroke="#0a4fb0" stroke-width=".4"/><rect x="13.3" y="3.3" width="2.600" height="2.600" fill="#1c6ee0" stroke="#0a4fb0" stroke-width=".4"/></svg>
<svg class="a" style="left:1233px;top:221px;overflow:visible" width="16" height="16" viewBox="0 0 16 16"><path d="M1.500 14.500C2 8 7 2.500 14.500 1.500" stroke="#111" stroke-width="1.200" fill="none"/><rect x="0.30000000000000004" y="13.3" width="2.600" height="2.600" fill="#1c6ee0" stroke="#0a4fb0" stroke-width=".4"/><rect x="4.3" y="4.3" width="2.600" height="2.600" fill="#1c6ee0" stroke="#0a4fb0" stroke-width=".4"/><rect x="13.3" y="0.30000000000000004" width="2.600" height="2.600" fill="#1c6ee0" stroke="#0a4fb0" stroke-width=".4"/></svg>
<svg class="a" style="left:1233px;top:243px;overflow:visible" width="16" height="16" viewBox="0 0 16 16"><circle cx="8" cy="8" r="6.800" fill="url(#gl)" stroke="#111" stroke-width="1.300"/><path d="M8 8L12.500 3.500" stroke="#1c3f7f" stroke-width="1.200"/><rect x="6.8" y="6.8" width="2.600" height="2.600" fill="#1c6ee0" stroke="#0a4fb0" stroke-width=".4"/></svg>
<svg class="a" style="left:1233px;top:265px;overflow:visible" width="16" height="16" viewBox="0 0 16 16"><path d="M4 2C6 0 9 1 9 3C11 1 15 3 13 6.500C16 8 15 13 12 12.500C12 15 8 15.500 7.500 13C5 13.500 3 11 5 9C1.500 9 1 4 4 2Z" fill="url(#gl)" stroke="#111" stroke-width="1.400"/></svg>
<svg class="a" style="left:1233px;top:287px;overflow:visible" width="16" height="16" viewBox="0 0 16 16"><path d="M1 14C3 4 5 5 8 8C11 11 13 10 15.500 1" stroke="#111" stroke-width="1.300" fill="none"/></svg>
<svg class="a" style="left:1233px;top:309px;overflow:visible" width="16" height="16" viewBox="0 0 16 16"><ellipse cx="8" cy="8.500" rx="6.500" ry="4.300" fill="url(#gl)" stroke="#111" stroke-width="1.300"/><rect x="0.30000000000000004" y="7.3" width="2.600" height="2.600" fill="#1c6ee0" stroke="#0a4fb0" stroke-width=".4"/><rect x="13.3" y="7.3" width="2.600" height="2.600" fill="#1c6ee0" stroke="#0a4fb0" stroke-width=".4"/><rect x="6.8" y="3.0" width="2.600" height="2.600" fill="#1c6ee0" stroke="#0a4fb0" stroke-width=".4"/></svg>
<svg class="a" style="left:1233px;top:331px;overflow:visible" width="16" height="16" viewBox="0 0 16 16"><path d="M2 7.500C3 2 14 2.500 14.500 8C14.500 11 11 12 8 12" fill="url(#gl)" stroke="#111" stroke-width="1.300"/><rect x="0.8" y="6.3" width="2.600" height="2.600" fill="#1c6ee0" stroke="#0a4fb0" stroke-width=".4"/><rect x="6.8" y="10.8" width="2.600" height="2.600" fill="#1c6ee0" stroke="#0a4fb0" stroke-width=".4"/></svg>
<svg class="a" style="left:1233px;top:353px;overflow:visible" width="16" height="16" viewBox="0 0 16 16"><path d="M6.500 .500H13L15.500 3V12H6.500Z" fill="url(#pg)" stroke="#7f9cc4" stroke-width=".8"/><rect x="2" y="5" width="7.500" height="5" fill="#e8e070" stroke="#2f5fa8" stroke-width="1"/><circle cx="9.500" cy="11.500" r="3.300" fill="#e8e070" stroke="#2f5fa8" stroke-width="1"/><path d="M16 12.500V16H12.500Z" fill="#000"/><rect x="0.30000000000000004" y="8.3" width="2.600" height="2.600" fill="#1c6ee0" stroke="#0a4fb0" stroke-width=".4"/></svg>
<svg class="a" style="left:1233px;top:375px;overflow:visible" width="16" height="16" viewBox="0 0 16 16"><rect x="3" y="2.500" width="8.500" height="6" fill="#e8e070" stroke="#2f5fa8" stroke-width="1"/><circle cx="11" cy="10.500" r="3.600" fill="#e8e070" stroke="#2f5fa8" stroke-width="1"/><rect x="1.3" y="6.8" width="2.600" height="2.600" fill="#1c6ee0" stroke="#0a4fb0" stroke-width=".4"/></svg>
<svg class="a" style="left:1233px;top:397px;overflow:visible" width="16" height="16" viewBox="0 0 16 16"><rect x="6.3" y="6.8" width="2.600" height="2.600" fill="#1c6ee0" stroke="#0a4fb0" stroke-width=".4"/></svg>
<svg class="a" style="left:1233px;top:419px;overflow:visible" width="16" height="16" viewBox="0 0 16 16"><rect x="4" y="3.500" width="9" height="9.500" fill="#fff"/><path d="M13 7L9 3.500M13 10.500L6 3.500M12 13L4 5M8.500 13L4 8.500M5 13L4 12" stroke="#2f5fa8" stroke-width="1.300"/><path d="M0 3.500H16M0 13H16M4 0V16M13 0V16" stroke="#2f5fa8" stroke-width="1.300"/></svg>
<svg class="a" style="left:1233px;top:441px;overflow:visible" width="16" height="16" viewBox="0 0 16 16"><defs><linearGradient id="gd" x1="0" y1="0" x2="1" y2="1"><stop offset="0" stop-color="#1f2f6f"/><stop offset="1" stop-color="#c9c070"/></linearGradient></defs><rect x="3" y="2" width="11" height="11" fill="url(#gd)"/><path d="M0 2.500H16M0 13H16M3.500 0V16M13.500 0V16" stroke="#111" stroke-width="1.300"/><path d="M9 13L14 6" stroke="#111"/></svg>
<svg class="a" style="left:1233px;top:463px;overflow:visible" width="16" height="16" viewBox="0 0 16 16"><path d="M1 2.500H10L15 7V13.500H1Z" fill="url(#pg)" stroke="#1f3f7f" stroke-width="1.300"/><circle cx="7.500" cy="8" r="2.800" fill="#e4ecf7" stroke="#1f3f7f" stroke-width="1.300"/></svg>
<svg class="a" style="left:1233px;top:485px;overflow:visible" width="16" height="16" viewBox="0 0 16 16"><rect x="1.500" y="2" width="13" height="12" fill="#e4ecf7" stroke="#4f7fd0"/><rect x="1.500" y="2" width="13" height="2.500" fill="#2f5fd0"/><path d="M1.500 7.500H14.500M1.500 10.800H14.500M5.800 4.500V14M10.200 4.500V14" stroke="#5f8fe0" stroke-width="1.200"/></svg>
<svg class="a" style="left:1233px;top:507px;overflow:visible" width="16" height="16" viewBox="0 0 16 16"><text x="8" y="14.500" font-family="Liberation Sans,sans-serif" font-size="18.500" fill="#111" text-anchor="middle">A</text></svg>
<svg class="a" style="left:1259px;top:108px;overflow:visible" width="16" height="16" viewBox="0 0 16 16"><path d="M0 14.500H16" stroke="#333" stroke-width="1"/><path d="M8 6L15.500 0L16.500 4L10.500 9.500Z" fill="#f0c020" stroke="#a8860f" stroke-width=".5"/><path d="M6.500 8L8.500 5.500L11 9L9 11Z" fill="#e9e9ee"/><path d="M4 10L6.500 7.500L9.500 10.500L7 13.500C5 14.500 3 12 4 10Z" fill="#e87070" stroke="#b03030" stroke-width=".6"/><path d="M6.500 8L9 11" stroke="#2fa090" stroke-width="1.200"/></svg>
<svg class="a" style="left:1259px;top:130px;overflow:visible" width="16" height="16" viewBox="0 0 16 16"><circle cx="3.500" cy="4" r="2.800" fill="url(#gl)" stroke="#333" stroke-width="1"/><circle cx="9" cy="11" r="3.200" fill="url(#gl)" stroke="#333" stroke-width="1"/><circle cx="12.500" cy="12" r="3.200" fill="url(#gl)" stroke="#333" stroke-width="1"/><path d="M6 3.500C9 1 13 2 13 6" stroke="#1f4f9f" stroke-width="1.700" fill="none"/><path d="M10.500 5.500H15.800L13.200 8.500Z" fill="#1f4f9f"/></svg>
<svg class="a" style="left:1259px;top:152px;overflow:visible" width="16" height="16" viewBox="0 0 16 16"><path d="M8 0V16" stroke="#1c6ee0" stroke-width="1.200"/><path d="M1 13.500H5.500V3Z" fill="url(#pg)" stroke="#222" stroke-width="1.200"/><path d="M15 13.500H10.500V3Z" fill="url(#pg)" stroke="#222" stroke-width="1.200"/></svg>
<svg class="a" style="left:1259px;top:174px;overflow:visible" width="16" height="16" viewBox="0 0 16 16"><path d="M16 13.500H4C0 13.500 0 8 4 7.500C4 0 12 0 12.500 5.500" fill="none" stroke="#222" stroke-width="1.300"/><path d="M16 10.500H5C2.500 10.500 3 8.500 7 8.500C6.500 3 10 3 10 8H16" fill="url(#pg)" stroke="#1c6ee0" stroke-width="1.300"/></svg>
<svg class="a" style="left:1259px;top:196px;overflow:visible" width="16" height="16" viewBox="0 0 16 16"><g fill="url(#pg)" stroke="#222" stroke-width="1.200"><rect x="1" y="1" width="5.500" height="5.500"/><rect x="9.500" y="1" width="5.500" height="5.500"/><rect x="1" y="9.500" width="5.500" height="5.500"/><rect x="9.500" y="9.500" width="5.500" height="5.500"/></g></svg>
<svg class="a" style="left:1259px;top:218px;overflow:visible" width="16" height="16" viewBox="0 0 16 16"><path d="M8 0L11 3.500H9V7H12.500V5L16 8L12.500 11V9H9V12.500H11L8 16L5 12.500H7V9H3.500V11L0 8L3.500 5V7H7V3.500H5Z" fill="#3f6fb0"/></svg>
<svg class="a" style="left:1259px;top:240px;overflow:visible" width="16" height="16" viewBox="0 0 16 16"><path d="M5.500 3C1 5 1 12 6 14C11 16 15.500 11 14 6.500C13.500 5 12.500 4 11.500 3.200" fill="none" stroke="#3f6fb0" stroke-width="2"/><path d="M2 0L8.500 1.500L4.500 7Z" fill="#3f6fb0"/></svg>
<svg class="a" style="left:1259px;top:262px;overflow:visible" width="16" height="16" viewBox="0 0 16 16"><rect x=".500" y=".500" width="15" height="15" fill="url(#pg)" stroke="#4f7fc0" stroke-width="1"/><rect x=".800" y="7" width="8" height="8" fill="#e4ecf7" stroke="#111" stroke-width="1.300" stroke-dasharray="1.300 1.300"/></svg>
<svg class="a" style="left:1259px;top:284px;overflow:visible" width="16" height="16" viewBox="0 0 16 16"><path d="M7 .500L15.500 15.500H7Z" fill="url(#bl)" stroke="#5f88c0" stroke-width=".6"/><path d="M5.500 1H1V15H5.500" fill="#e4ecf7" stroke="#111" stroke-width="1.400"/><path d="M5.500 1V15" stroke="#111" stroke-width="1.200" stroke-dasharray="1.300 1.300"/></svg>
<svg class="a" style="left:1259px;top:306px;overflow:visible" width="16" height="16" viewBox="0 0 16 16"><path d="M0 6H6" stroke="#111" stroke-width="1.300"/><path d="M4.500 12L10.500 0" stroke="#1c6ee0" stroke-width="1.300"/><path d="M8.500 6H16" stroke="#1c6ee0" stroke-width="1.200" stroke-dasharray="2 1.300"/></svg>
<svg class="a" style="left:1259px;top:328px;overflow:visible" width="16" height="16" viewBox="0 0 16 16"><path d="M0 6H6" stroke="#111" stroke-width="1.300"/><path d="M10 12L16 0" stroke="#1c6ee0" stroke-width="1.300"/><path d="M7 6H12" stroke="#1c6ee0" stroke-width="1.200" stroke-dasharray="2 1.300"/></svg>
<svg class="a" style="left:1259px;top:350px;overflow:visible" width="16" height="16" viewBox="0 0 16 16"><rect x=".800" y="3.500" width="14.500" height="10.500" fill="url(#pg)" stroke="#111" stroke-width="1.300"/><rect x="9.500" y="2" width="3" height="3" fill="#3f6fb0"/></svg>
<svg class="a" style="left:1259px;top:372px;overflow:visible" width="16" height="16" viewBox="0 0 16 16"><path d="M4 3.500H.800V14H15.300V3.500H12" fill="url(#pg)" stroke="#111" stroke-width="1.300"/><rect x="2.500" y="2" width="3" height="3" fill="#3f6fb0"/><rect x="10.500" y="2" width="3" height="3" fill="#3f6fb0"/></svg>
<svg class="a" style="left:1259px;top:394px;overflow:visible" width="16" height="16" viewBox="0 0 16 16"><path d="M0 8H16" stroke="#111" stroke-width="1.600"/><path d="M3.500 4L8 8L3.500 12ZM12.500 4L8 8L12.500 12Z" fill="#2f5f9f"/></svg>
<svg class="a" style="left:1259px;top:416px;overflow:visible" width="16" height="16" viewBox="0 0 16 16"><path d="M1 0V1M1 2V3M1 4V5M3 1H4M5 1H6M7 1H8" stroke="#111" stroke-width="1"/><path d="M1 6L8.500 1" stroke="#1c6ee0" stroke-width="1.500"/><path d="M1 6V16M8.500 1H16" stroke="#111" stroke-width="1.300"/></svg>
<svg class="a" style="left:1259px;top:438px;overflow:visible" width="16" height="16" viewBox="0 0 16 16"><path d="M1 0V1M1 2V3M1 4V5M3 1H4M5 1H6M7 1H8" stroke="#111" stroke-width="1"/><path d="M1 9C1 4 4 1 10 1" stroke="#1c6ee0" stroke-width="1.600" fill="none"/><path d="M1 9V16M10 1H16" stroke="#111" stroke-width="1.300"/></svg>
<svg class="a" style="left:1259px;top:460px;overflow:visible" width="16" height="16" viewBox="0 0 16 16"><path d="M6 6L10 2L9.500 6.500L14 7.500L10 9.500L11.500 14L7.500 11L4 14.500L5 10L.500 9L5 7.500Z" fill="#f7d020"/><path d="M2 12C1 14 3 16 5 14.500L10 8L7.500 6Z" fill="#e02020" stroke="#901010" stroke-width=".6"/><path d="M10 5.500L14 1.500" stroke="#555" stroke-width="1.300"/><path d="M13 0L14 1.500L15.800 1L14.800 2.500L16 4L14.200 3.500" stroke="#b8c4e0" stroke-width=".8" fill="none"/></svg>
<svg class="a" style="left:1259px;top:500px;overflow:visible" width="16" height="16" viewBox="0 0 16 16"><rect x="1" y="0.5" width="7" height="5" fill="url(#pg)" stroke="#6f94c4" stroke-width="1"/><rect x="9" y="9" width="6.5" height="6" fill="url(#pg)" stroke="#6f94c4" stroke-width="1"/><rect x="4" y="3.5" width="8" height="8.5" fill="#5b84b8" stroke="#3d669f" stroke-width="1"/></svg>
<svg class="a" style="left:1259px;top:522px;overflow:visible" width="16" height="16" viewBox="0 0 16 16"><rect x="4" y="3.5" width="8" height="8.5" fill="#5b84b8" stroke="#3d669f" stroke-width="1"/><rect x="1" y="0.5" width="7" height="5" fill="url(#pg)" stroke="#6f94c4" stroke-width="1"/><rect x="9" y="9" width="6.5" height="6" fill="url(#pg)" stroke="#6f94c4" stroke-width="1"/></svg>
<svg class="a" style="left:1259px;top:544px;overflow:visible" width="16" height="16" viewBox="0 0 16 16"><rect x="5.5" y="6.5" width="10" height="9" fill="url(#pg)" stroke="#6f94c4" stroke-width="1"/><rect x="1.5" y="1.5" width="10.5" height="9" fill="#5b84b8" stroke="#3d669f" stroke-width="1"/></svg>
<svg class="a" style="left:1259px;top:566px;overflow:visible" width="16" height="16" viewBox="0 0 16 16"><rect x="1.5" y="1.5" width="10.5" height="9" fill="#5b84b8" stroke="#3d669f" stroke-width="1"/><rect x="5.5" y="6.5" width="10" height="9" fill="url(#pg)" stroke="#6f94c4" stroke-width="1"/></svg>
<div class="a" style="left:0;top:893px;width:1226px;height:16px;background:#ece9d8"></div>
<div class="a" style="left:0;top:95px;width:2px;height:798px;background:#b4b1a2"></div>
<div class="a" style="left:2px;top:894px;width:18px;height:14px;border-right:1px solid #aca899;border-left:1px solid #fff"></div>
<svg class="a" style="left:5px;top:896px" width="10" height="10" viewBox="0 0 10 10"><path d="M2 0V9M9 0L4 4.500L9 9Z" fill="#000" stroke="#000" stroke-width="1.400"/></svg>
<div class="a" style="left:21px;top:894px;width:18px;height:14px;border-right:1px solid #aca899;border-left:1px solid #fff"></div>
<svg class="a" style="left:24px;top:896px" width="10" height="10" viewBox="0 0 10 10"><path d="M7 0L2 4.500L7 9Z" fill="#000" stroke="#000" stroke-width="1.400"/></svg>
<div class="a" style="left:39px;top:894px;width:18px;height:14px;border-right:1px solid #aca899;border-left:1px solid #fff"></div>
<svg class="a" style="left:42px;top:896px" width="10" height="10" viewBox="0 0 10 10"><path d="M2 0L7 4.500L2 9Z" fill="#000" stroke="#000" stroke-width="1.400"/></svg>
<div class="a" style="left:57px;top:894px;width:18px;height:14px;border-right:1px solid #aca899;border-left:1px solid #fff"></div>
<svg class="a" style="left:60px;top:896px" width="10" height="10" viewBox="0 0 10 10"><path d="M0 0L5 4.500L0 9ZM7 0V9" fill="#000" stroke="#000" stroke-width="1.400"/></svg>
<svg class="a" style="left:76px;top:893px" width="112" height="16" viewBox="0 0 112 16"><path d="M2 0L7 14H52L56 0Z" fill="#000"/><path d="M56 0L52 14M54 14L59 1M59 1L57 14H102L107 0" fill="none" stroke="#000" stroke-width="1"/><path d="M58 14.500H103" stroke="#000"/></svg>
<span class="a" style="left:85px;top:893px;font:400 11.5px/14px 'Liberation Sans',sans-serif;letter-spacing:-0.464px;color:#fff;white-space:pre;">Модель</span>
<span class="a" style="left:136px;top:893px;font:400 11.5px/14px 'Liberation Sans',sans-serif;letter-spacing:-0.562px;color:#000;white-space:pre;">Layout1</span>
<div class="a" style="left:0;top:909px;width:1280px;height:3px;background:linear-gradient(#f6f5ee 0,#f6f5ee 1px,#fff 1px,#fff 2px,#f6f5ee 2px,#f6f5ee 3px)"></div>
<div class="a" style="left:0;top:914px;width:1280px;height:2px;background:linear-gradient(#77756a 0,#77756a 1px,#000 1px,#000 2px)"></div>
<div class="a" style="left:0;top:916px;width:1280px;height:56px;background:#ece9d8"></div>
<div class="a grip" style="left:6px;top:924px;height:40px"></div>
<div class="a" style="left:17px;top:926px;width:1256px;height:42px;background:#fff;border-top:1px solid #000;border-left:1px solid #000;box-shadow:0 -1px 0 #77756a"></div>
<div class="a" style="left:18px;top:949px;width:1255px;height:1px;background:#aca899"></div>
<div class="a" style="left:1186px;top:950px;width:87px;height:18px;background:#ece9d8"></div>
<span class="a" style="left:18px;top:928px;font:400 13px/15px 'Liberation Mono',monospace;letter-spacing:0.198px;color:#000;white-space:pre;">Конечная точка дуги:</span>
<span class="a" style="left:18px;top:953px;font:400 13px/15px 'Liberation Mono',monospace;letter-spacing:0.072px;color:#000;white-space:pre;">Команда:</span>
<div class="a" style="left:1257px;top:928px;width:14px;height:9px;background:linear-gradient(#d2defc,#b9cbf7);border:1px solid #fff;border-radius:2px;box-shadow:0 0 0 1px #b4c4ee"></div><div class="a" style="left:1257px;top:940px;width:14px;height:9px;background:linear-gradient(#d2defc,#b9cbf7);border:1px solid #fff;border-radius:2px;box-shadow:0 0 0 1px #b4c4ee"></div>
<svg class="a" style="left:1260px;top:930px" width="8" height="18" viewBox="0 0 8 18"><path d="M1.500 4L4 1.500L6.500 4M1.500 13L4 15.500L6.500 13" fill="none" stroke="#4d6185" stroke-width="1.600"/></svg>
<div class="a" style="left:1190px;top:951px;width:63px;height:16px;background:#f4f3ee"></div>
<div class="a" style="left:1190px;top:951px;width:15px;height:16px;background:linear-gradient(#d2defc,#b9cbf7);border:1px solid #fff;border-radius:2px;box-shadow:0 0 0 1px #b4c4ee"></div>
<div class="a" style="left:1238px;top:951px;width:15px;height:16px;background:linear-gradient(#d2defc,#b9cbf7);border:1px solid #fff;border-radius:2px;box-shadow:0 0 0 1px #b4c4ee"></div>
<div class="a" style="left:1207px;top:951px;width:15px;height:16px;background:linear-gradient(#d2defc,#b9cbf7);border:1px solid #fff;border-radius:2px;box-shadow:0 0 0 1px #b4c4ee"></div>
<svg class="a" style="left:1190px;top:951px" width="64" height="17" viewBox="0 0 64 17"><path d="M10 4.500L6 8.500L10 12.500M53 4.500L57 8.500L53 12.500" fill="none" stroke="#4d6185" stroke-width="2"/><path d="M21.500 6V12M23.500 6V12M25.500 6V12M27.500 6V12" stroke="#8ea5e0" stroke-width="1"/></svg>
<div class="a" style="left:0;top:969px;width:1280px;height:5px;background:linear-gradient(#fff 0,#fff 1px,#aca899 1px,#aca899 2px,#fff 2px,#fff 3px,#8a8878 3px,#8a8878 4px,#c5c2b2 4px,#c5c2b2 5px)"></div>
<div class="a" style="left:0;top:974px;width:1280px;height:21px;background:#ece9d8"></div>
<div class="a" style="left:4px;top:975px;width:190px;height:18px;border:1px solid;border-color:#aca899 #fff #fff #aca899"></div>
<span class="a" style="left:8px;top:977px;font:400 12px/15px 'Liberation Sans',sans-serif;letter-spacing:-0.621px;color:#000;white-space:pre;">491.2459, 689.1255, 0.0000</span>
<div class="a" style="left:198px;top:975px;width:26px;height:18px;border:1px solid;border-color:#fff #aca899 #aca899 #fff"></div>
<span class="a" style="left:200px;top:977px;font:400 12.5px/15px 'Liberation Sans',sans-serif;color:#000;white-space:pre;transform-origin:0 0;transform:scaleX(0.8471)">ШАГ</span>
<div class="a" style="left:228px;top:975px;width:39px;height:18px;border:1px solid;border-color:#fff #aca899 #aca899 #fff"></div>
<span class="a" style="left:230.2px;top:977px;font:400 12.5px/15px 'Liberation Sans',sans-serif;color:#000;white-space:pre;transform-origin:0 0;transform:scaleX(0.8615)">СЕТКА</span>
<div class="a" style="left:271px;top:975px;width:34px;height:18px;border:1px solid;border-color:#fff #aca899 #aca899 #fff"></div>
<span class="a" style="left:273.3px;top:977px;font:400 12.5px/15px 'Liberation Sans',sans-serif;color:#000;white-space:pre;transform-origin:0 0;transform:scaleX(0.8426)">ОРТО</span>
<div class="a" style="left:309px;top:975px;width:68px;height:18px;border:1px solid;border-color:#fff #aca899 #aca899 #fff"></div>
<span class="a" style="left:311.5px;top:977px;font:400 12.5px/15px 'Liberation Sans',sans-serif;color:#000;white-space:pre;transform-origin:0 0;transform:scaleX(0.8502)">ОТС-ПОЛЯР</span>
<div class="a" style="left:382px;top:975px;width:62px;height:18px;border:1px solid;border-color:#fff #aca899 #aca899 #fff"></div>
<span class="a" style="left:383.5px;top:977px;font:400 12.5px/15px 'Liberation Sans',sans-serif;color:#000;white-space:pre;transform-origin:0 0;transform:scaleX(0.8805)">ПРИВЯЗКА</span>
<div class="a" style="left:448px;top:975px;width:73px;height:18px;border:1px solid;border-color:#fff #aca899 #aca899 #fff"></div>
<span class="a" style="left:450.6px;top:977px;font:400 12.5px/15px 'Liberation Sans',sans-serif;color:#000;white-space:pre;transform-origin:0 0;transform:scaleX(0.8336)">ОТС-ОБЪЕКТ</span>
<div class="a" style="left:526px;top:974px;width:34px;height:19px;background:#f6f5ee;border:solid;border-width:2px 1px 1px 2px;border-color:#000 #fff #fff #000"></div>
<span class="a" style="left:529.4px;top:978px;font:400 12.5px/15px 'Liberation Sans',sans-serif;color:#000;white-space:pre;transform-origin:0 0;transform:scaleX(0.8559)">ДПСК</span>
<div class="a" style="left:564px;top:974px;width:30px;height:19px;background:#f6f5ee;border:solid;border-width:2px 1px 1px 2px;border-color:#000 #fff #fff #000"></div>
<span class="a" style="left:568px;top:978px;font:400 12.5px/15px 'Liberation Sans',sans-serif;color:#000;white-space:pre;transform-origin:0 0;transform:scaleX(0.8835)">ДИН</span>
<div class="a" style="left:598px;top:975px;width:24px;height:18px;border:1px solid;border-color:#fff #aca899 #aca899 #fff"></div>
<span class="a" style="left:599.5px;top:977px;font:400 12.5px/15px 'Liberation Sans',sans-serif;color:#000;white-space:pre;transform-origin:0 0;transform:scaleX(0.8170)">ВЕС</span>
<div class="a" style="left:626px;top:974px;width:52px;height:19px;background:#f6f5ee;border:solid;border-width:2px 1px 1px 2px;border-color:#000 #fff #fff #000"></div>
<span class="a" style="left:629.4px;top:978px;font:400 12.5px/15px 'Liberation Sans',sans-serif;color:#000;white-space:pre;transform-origin:0 0;transform:scaleX(0.8930)">МОДЕЛЬ</span>
<div class="a" style="left:1174px;top:974px;width:64px;height:19px;border:1px solid;border-color:#aca899 #fff #fff #aca899"></div>
<svg class="a" style="left:1176px;top:975px" width="64" height="18" viewBox="0 0 64 18"><path d="M3 2L10 14M11 1L3 10" stroke="#7f8fb0" stroke-width="1.500"/><circle cx="7" cy="6" r="4" fill="#b9c4dc" stroke="#7f8fb0"/><path d="M12 5L18 16H6Z" fill="#f7d820" stroke="#8f7800" stroke-width=".8"/><path d="M12 9V13M12 14V15" stroke="#000" stroke-width="1.300"/><path d="M27 8V5C27 1 34 1 34 5" fill="none" stroke="#c9a800" stroke-width="2"/><rect x="21" y="8" width="10" height="8" fill="#e8c820" stroke="#8f7800" stroke-width=".8"/><path d="M22 10.500H30M22 13H30" stroke="#8f7800" stroke-width=".8"/><path d="M39 1H47L50 4V15H39Z" fill="#2f5f9f" stroke="#1f3f6f"/><path d="M43 3V14M40.500 7H45.500" stroke="#fff" stroke-width="1.200"/><circle cx="50" cy="13" r="4" fill="#2fb040" stroke="#fff" stroke-width=".6"/><path d="M48 13L49.500 14.500L52 11.500" stroke="#fff" stroke-width="1.200" fill="none"/></svg>
<svg class="a" style="left:1243px;top:984px" width="9" height="5" viewBox="0 0 9 5"><path d="M0 0H9L4.500 5Z" fill="#000"/></svg>
<div class="a" style="left:1260px;top:975px;width:16px;height:16px;border:2px solid #2f5f9f;background:linear-gradient(135deg,#e4ecf7,#a9c4e4)"></div>
<div class="a" style="left:0;top:994px;width:1280px;height:4px;background:linear-gradient(#3168d5,#4b8af0 30%,#2a63d8)"></div>
<div class="a" style="left:0;top:994px;width:93px;height:4px;border-radius:0 4px 0 0;background:linear-gradient(#3f8f3f,#6fbf6f 30%,#3f9f3f)"></div>
<div class="a" style="left:1170px;top:994px;width:110px;height:4px;background:linear-gradient(#1f80d0,#3fb0f8 30%,#1fa0f0)"></div>
</div></body></html>
